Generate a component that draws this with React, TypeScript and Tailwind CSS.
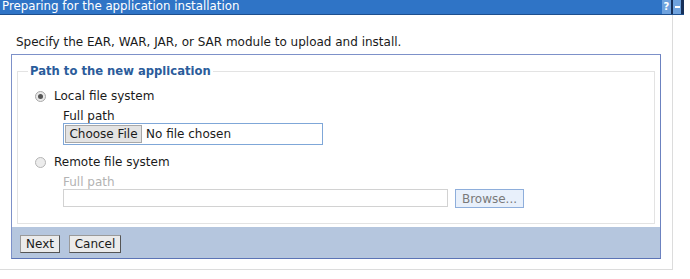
export default function App() {
  return (
    <div className="relative h-[279px] w-[690px] overflow-hidden bg-white font-['DejaVu_Sans',sans-serif] text-[12px] text-[#1a1a1a]">
      {/* title bar */}
      <div className="flex h-[15px] w-[684px] items-center justify-between border-b border-[#1d4f8e] bg-[#2f74c6]">
        <span className="pl-[2px] text-[11.8px] leading-none text-white">
          Preparing for the application installation
        </span>
        <div className="flex h-full items-stretch">
          <span className="flex w-[9px] items-center justify-center bg-[#6ea2de] text-[10px] font-bold leading-none text-white">
            ?
          </span>
          <span className="w-[2px] bg-[#16305a]" />
          <span className="flex w-[8px] items-center justify-center bg-[#6ea2de]">
            <span className="h-[2px] w-[5px] bg-white" />
          </span>
          <span className="w-[3px] bg-[#16305a]" />
        </div>
      </div>

      {/* body */}
      <div className="h-[255px] w-[673px] border-r border-b border-[#dcdcdc]">
        <p className="pl-[16px] pt-[20px] leading-[15px]">
          Specify the EAR, WAR, JAR, or SAR module to upload and install.
        </p>

        <div className="ml-[11px] mt-[4px] w-[650px] border border-[#7d91c9] border-b-[#5c74b6] border-r-[#6c82c0]">
          <div className="px-[5px] pb-[3px] pt-[9px]">
            <fieldset className="border border-[#e3e3e3] pb-[15px] pl-[10px]">
              <legend className="px-[2px] text-[11.6px] font-bold leading-[15px] text-[#2b5c9b]">
                Path to the new application
              </legend>

              <div className="mt-[10px] flex items-center gap-[8px] pl-[7px]">
                <span className="flex h-[11px] w-[11px] items-center justify-center rounded-full border border-[#a9a9a9] bg-[#e9e9e9]">
                  <span className="h-[5px] w-[5px] rounded-full bg-[#555]" />
                </span>
                <span className="leading-[15px]">Local file system</span>
              </div>
              <div className="pl-[35px]">
                <div className="mt-[5px] leading-[15px]">Full path</div>
                <div className="-mt-[1px] flex h-[22px] w-[260px] items-center border border-[#7fa7d8] pl-[1px]">
                  <span className="flex h-[18px] w-[77px] items-center justify-center border border-[#a8a8a8] bg-[#e3e3e3] leading-none">
                    Choose File
                  </span>
                  <span className="pl-[4px] leading-none">No file chosen</span>
                </div>
              </div>

              <div className="mt-[10px] flex items-center gap-[8px] pl-[7px]">
                <span className="h-[11px] w-[11px] rounded-full border border-[#b5b5b5] bg-[#ececec]" />
                <span className="leading-[15px]">Remote file system</span>
              </div>
              <div className="pl-[35px]">
                <div className="mt-[5px] leading-[15px] text-[#b3b3b3]">Full path</div>
                <div className="-mt-[1px] flex items-start gap-[7px]">
                  <span className="h-[18px] w-[385px] border border-[#d2d2d2] bg-white" />
                  <span className="flex h-[19px] w-[69px] items-center justify-center border border-[#8eaedb] bg-[#e8f0fb] leading-none text-[#7a7a7a]">
                    Browse...
                  </span>
                </div>
              </div>
            </fieldset>
          </div>

          <div className="flex h-[31px] items-center gap-[9px] bg-[#b5c6de] pl-[8px] pt-[2px]">
            <button className="h-[18px] w-[40px] border border-[#9a9a9a] border-b-[#555] border-r-[#555] bg-[#ebebeb] leading-none">
              Next
            </button>
            <button className="h-[18px] w-[52px] border border-[#9a9a9a] border-b-[#555] border-r-[#555] bg-[#ebebeb] leading-none">
              Cancel
            </button>
          </div>
        </div>
      </div>
    </div>
  );
}
